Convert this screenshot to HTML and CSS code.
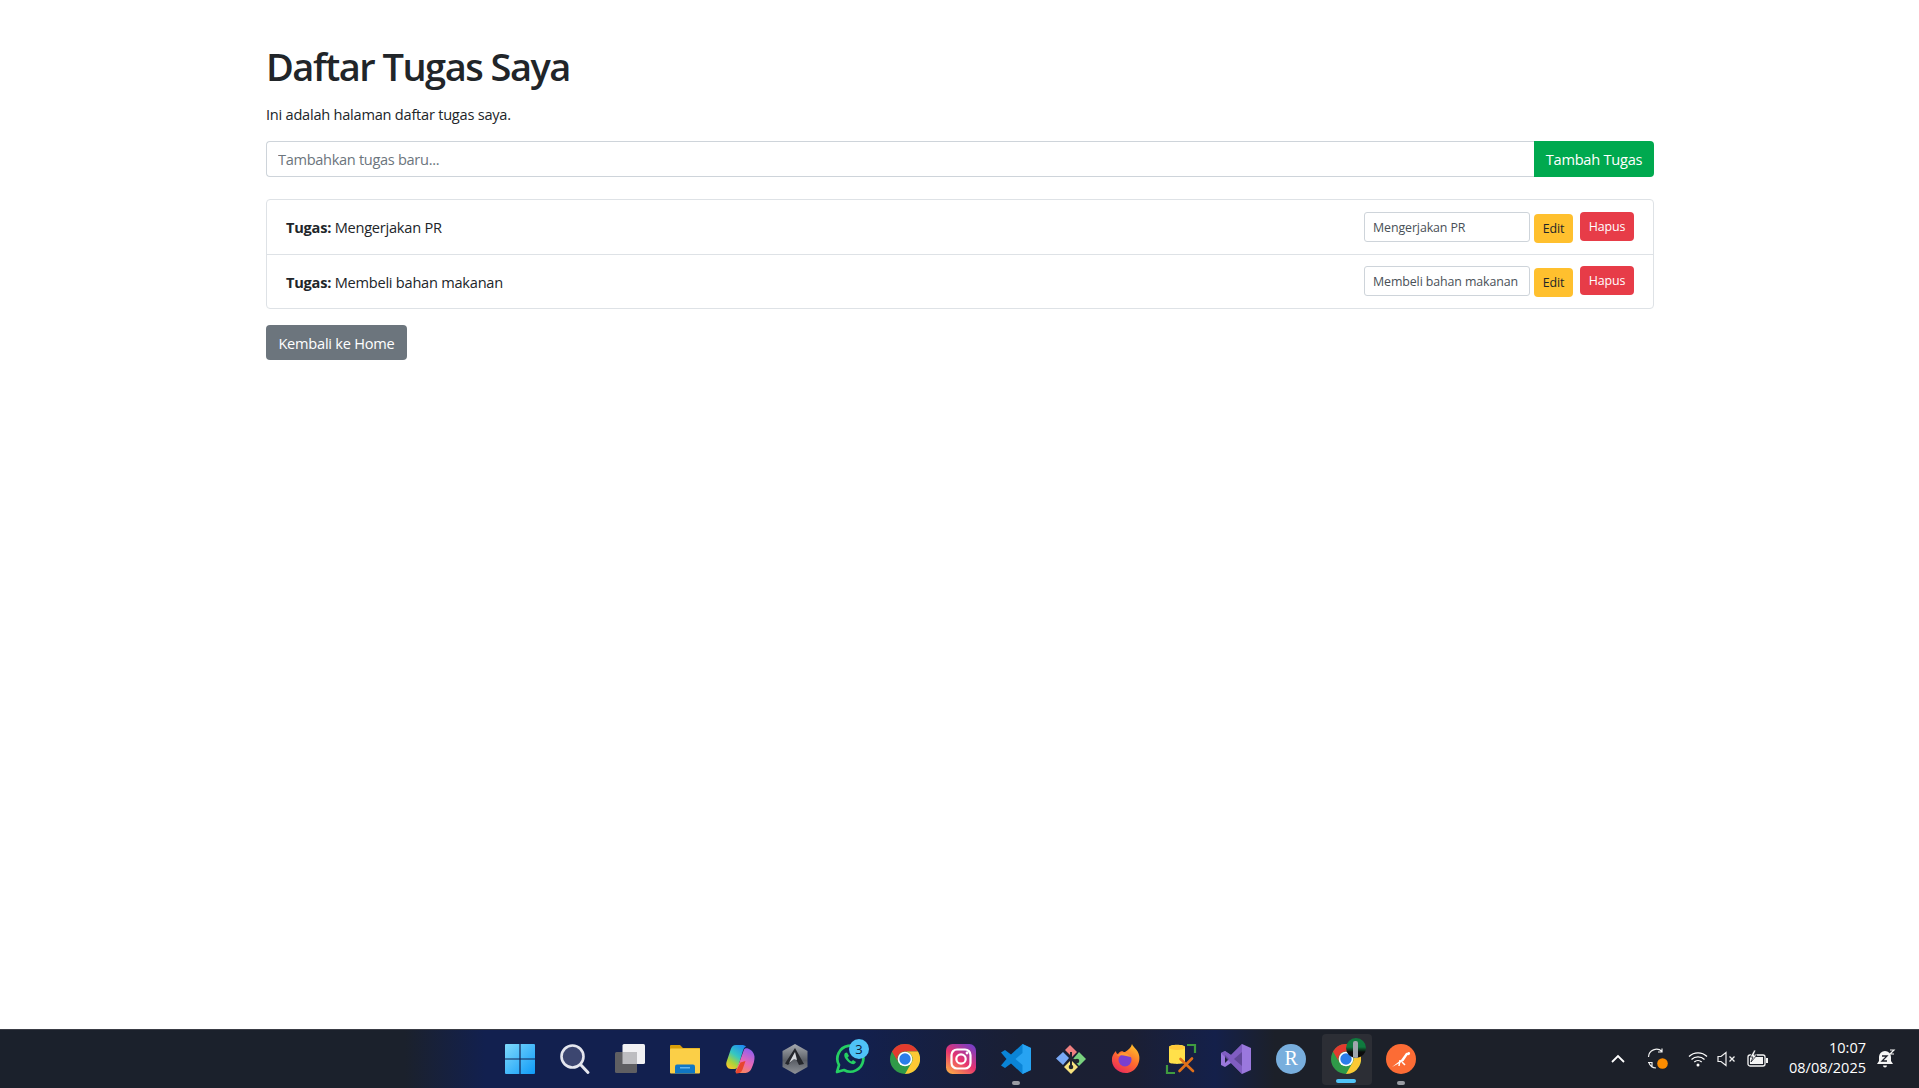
FILE: index.html
```html
<!DOCTYPE html>
<html lang="id">
<head>
<meta charset="utf-8">
<title>Daftar Tugas Saya</title>
<link rel="stylesheet" href="styles.css">
</head>
<body>
<main class="page">
  <h1 class="title">Daftar Tugas Saya</h1>
  <p class="lead">Ini adalah halaman daftar tugas saya.</p>
  <form class="add-group">
    <input class="add-input" type="text" placeholder="Tambahkan tugas baru...">
    <button class="btn btn-add" type="button">Tambah Tugas</button>
  </form>
  <ul class="task-list">
    <li class="task-row">
      <span class="task-text"><strong>Tugas:</strong> Mengerjakan PR</span>
      <div class="task-actions">
        <input class="edit-input" type="text" value="Mengerjakan PR">
        <button class="btn btn-edit" type="button">Edit</button>
        <button class="btn btn-del" type="button">Hapus</button>
      </div>
    </li>
    <li class="task-row">
      <span class="task-text"><strong>Tugas:</strong> Membeli bahan makanan</span>
      <div class="task-actions">
        <input class="edit-input" type="text" value="Membeli bahan makanan">
        <button class="btn btn-edit" type="button">Edit</button>
        <button class="btn btn-del" type="button">Hapus</button>
      </div>
    </li>
  </ul>
  <a class="btn btn-back" href="#">Kembali ke Home</a>
</main>

<footer class="taskbar">
  <div class="dock">
    <div class="slot"><svg class="ico" viewBox="0 0 30 30"><defs><linearGradient id="w" x1="0" y1="0" x2="1" y2="1"><stop offset="0" stop-color="#7fd9fb"/><stop offset="1" stop-color="#0f9bf8"/></linearGradient></defs><path fill="url(#w)" d="M0 1a1 1 0 0 1 1-1h13.400v14.400H0zM15.600 0H29a1 1 0 0 1 1 1v13.400H15.600zM0 15.600h14.400V30H1a1 1 0 0 1-1-1zM15.600 15.600H30V29a1 1 0 0 1-1 1H15.600z"/></svg></div>
    <div class="slot"><svg class="ico" viewBox="0 0 30 30"><circle cx="12.500" cy="12.500" r="11" fill="#3c4670" stroke="#e4e6ee" stroke-width="2.600"/><path d="M20.500 20.500l7.500 8" stroke="#e4e6ee" stroke-width="3" stroke-linecap="round"/></svg></div>
    <div class="slot"><svg class="ico" viewBox="0 0 30 30"><rect x="7.500" y="0" width="22.500" height="20" rx="1.500" fill="#f1f1f3"/><rect x="0" y="8" width="22" height="21" rx="1.500" fill="#5f5f62"/><rect x="7.500" y="8" width="14.500" height="12" fill="#bdbdc0"/></svg></div>
    <div class="slot"><svg class="ico" viewBox="0 0 30 30"><path d="M0 2a1 1 0 0 1 1-1h9l3 3h17v4H0z" fill="#d99e09"/><rect x="0" y="4.500" width="30" height="25" rx="1" fill="#fbcf47"/><path d="M5 29.500v-7a2 2 0 0 1 2-2h16a2 2 0 0 1 2 2v7z" fill="#1077c4"/><rect x="10" y="23" width="10" height="1.500" fill="#63b6ef"/></svg></div>
    <div class="slot"><svg class="ico" viewBox="0 0 30 30"><defs><linearGradient id="c1" x1="0.800" y1="0" x2="0.200" y2="1"><stop offset="0" stop-color="#1f8cf0"/><stop offset="0.450" stop-color="#35c7c2"/><stop offset="0.750" stop-color="#a9d43b"/><stop offset="1" stop-color="#f7c62c"/></linearGradient><linearGradient id="c2" x1="0.700" y1="0" x2="0.300" y2="1"><stop offset="0" stop-color="#8d5ff0"/><stop offset="0.550" stop-color="#e868b8"/><stop offset="1" stop-color="#f8875a"/></linearGradient></defs><path d="M17 1h-6c-3 0-4.500 2-5.300 4.500L1.500 18c-1 3.500 1 7 4.500 7h3.500c2 0 3.500-1.500 4-3.500L18 6.500c.6-2.200 2-3.500 3-4C20 1.500 18.500 1 17 1z" fill="url(#c1)"/><path d="M19 5.500c1-1.500 2.500-1.500 4-1 2.500.8 6 3.500 6.500 8 .3 3-1 8-3 12-1 2.300-3 4.500-6 4.500h-8c-2 0-2.500-1.200-1.500-3l3.500-8z" fill="url(#c2)"/><path d="M11.500 29.500c2.500 0 5-1 6-4l3-8.500-5 1.500-4 8c-.8 1.500-.8 3 0 3z" fill="#e8452f"/></svg></div>
    <div class="slot"><svg class="ico hex" viewBox="0 0 30 30"><defs><linearGradient id="h" x1="0" y1="0" x2="0" y2="1"><stop offset="0" stop-color="#a6aab0"/><stop offset="0.550" stop-color="#5b5f66"/><stop offset="1" stop-color="#8e9298"/></linearGradient></defs><path d="M15 0l12.500 7v16L15 30 2.500 23V7z" fill="url(#h)"/><path d="M15 4l9 16-5 1-4-8-7 8-3-1.500z" fill="#25272c"/><path d="M15 8l2 8-3-1-5 4z" fill="#d6d8dc"/></svg></div>
    <div class="slot badge-host"><svg class="ico" viewBox="0 0 30 30"><path d="M2 28l2-7A13 13 0 1 1 9 26z" fill="none" stroke="#25cf63" stroke-width="2.700" stroke-linejoin="round"/><path d="M10 9c-1 1-1 3 0 5 2 3 4 5 7 6 2 .5 3.500-.5 4-2l-3-2-1.500 1.500c-2-1-3-2.500-4-4L14 12l-2-3.500z" fill="#25cf63"/></svg><span class="badge">3</span></div>
    <div class="slot"><svg class="ico" viewBox="0 0 30 30"><use href="#chrome"/></svg></div>
    <div class="slot"><svg class="ico" viewBox="0 0 30 30"><defs><linearGradient id="ig" x1="0.100" y1="1" x2="0.800" y2="0"><stop offset="0" stop-color="#fcb045"/><stop offset="0.500" stop-color="#e7336f"/><stop offset="1" stop-color="#7a3fc4"/></linearGradient></defs><rect width="30" height="30" rx="6.500" fill="url(#ig)"/><rect x="5.500" y="5.500" width="19" height="19" rx="5.500" fill="none" stroke="#fff" stroke-width="2.200"/><circle cx="15" cy="15" r="4.700" fill="none" stroke="#fff" stroke-width="2.200"/><circle cx="21" cy="9" r="1.400" fill="#fff"/></svg></div>
    <div class="slot running"><svg class="ico" viewBox="0 0 30 30"><path d="M21.500 0L30 4v22l-8.500 4L10 19.500 4 24l-4-2.500L5.500 15 0 8.500 4 6l6 4.500z" fill="#0a84d6"/><path d="M21.500 0L30 4v22l-8.500 4V21l-7-6 7-6z" fill="#27a3f2"/></svg></div>
    <div class="slot"><svg class="ico" viewBox="0 0 30 30"><path d="M14 1l7 7-5 5-7-7z" fill="#f08080"/><path d="M7 8l6 6-6 7-7-6.500z" fill="#79a8f5"/><path d="M23 8l7 7-7 7-6-7z" fill="#79d17f"/><path d="M15 16l7 7-7 7-7-7z" fill="#f7e27e"/><path d="M15 8v15M15 15l6 2" stroke="#23262e" stroke-width="2" fill="none"/><circle cx="15" cy="23" r="2.300" fill="#23262e"/><circle cx="21" cy="17" r="2.300" fill="#23262e"/></svg></div>
    <div class="slot"><svg class="ico" viewBox="0 0 30 30"><defs><linearGradient id="ff" x1="0.800" y1="0" x2="0.200" y2="1"><stop offset="0" stop-color="#ffc42b"/><stop offset="0.500" stop-color="#ff6a2e"/><stop offset="1" stop-color="#e8265e"/></linearGradient></defs><path d="M21 0c1 3 6 6 7 11 2 8-4 18-13 18C6 29 0 22 1 14c.5-3 2-5 4-7 0 2 1 3 2 3 1-2 3-3 5-3 0 0-1 1 2 1 3-2 6-4 7-8z" fill="url(#ff)"/><circle cx="14" cy="16" r="6.500" fill="#7a3fd0"/><path d="M6 12c5-2 9 0 14 1-2-3-5-5-9-4-2 .5-4 1.500-5 3z" fill="#ff9833"/></svg></div>
    <div class="slot"><svg class="ico" viewBox="0 0 30 30"><path d="M21 1h8v8M1 21v8h8" fill="none" stroke="#3f9b3f" stroke-width="2.200"/><path d="M3 3c0-3 16-3 16 0v15c0 2.500-16 2.500-16 0z" fill="#ffe04a"/><ellipse cx="11" cy="3.500" rx="8" ry="2.500" fill="#ffc83a"/><path d="M13.500 27L26 14.500M14.500 15L27 27" stroke="#e0701a" stroke-width="2.600" stroke-linecap="round"/></svg></div>
    <div class="slot"><svg class="ico" viewBox="0 0 30 30"><path d="M21 0l9 4v22l-9 4-11-11-6 4-4-2V9l4-2 6 4z" fill="#9a78dd"/><path d="M21 8v14l-8-7z" fill="#20243c"/><path d="M4 11v8l4-4z" fill="#20243c"/><path d="M21 0L10 11 4 7 0 9l10 10 11 11z" fill="#7754b8" opacity=".75"/></svg></div>
    <div class="slot"><svg class="ico" viewBox="0 0 30 30"><circle cx="15" cy="15" r="15" fill="#78aedd"/><text class="r-letter" x="15" y="21" text-anchor="middle">R</text></svg></div>
    <div class="slot active running-blue"><svg class="ico" viewBox="0 0 30 30"><use href="#chrome"/></svg><span class="avatar"><span class="avatar-man"></span></span></div>
    <div class="slot running"><svg class="ico" viewBox="0 0 30 30"><circle cx="15" cy="15" r="15" fill="#fc6c35"/><path d="M6 23l9-7 5-7 2-.5c1-1 2.500 0 2 1.500-.5 1-1.500 1.500-2.500 1l-4 6z" fill="#fff"/><path d="M14 16l-1 6M16 18l3 3" stroke="#fff" stroke-width="1.500"/></svg></div>
  </div>
  <div class="tray">
    <svg class="tray-ico chev" viewBox="0 0 16 10"><path d="M2 8l6-6 6 6" fill="none" stroke="#fff" stroke-width="1.800"/></svg>
    <svg class="tray-ico sync" viewBox="0 0 22 22"><path d="M1.500 9A8 8 0 0 1 15 3.500M15 .5v3.500h-4M1 14.500h4v3.500M2 15a8 8 0 0 0 7 5" fill="none" stroke="#f1f1f1" stroke-width="1.200"/><circle cx="15.500" cy="15.500" r="5.300" fill="#fb8c00"/></svg>
    <svg class="tray-ico wifi" viewBox="0 0 20 16"><path d="M1 5.500a13 13 0 0 1 18 0M3.500 8.500a9.500 9.500 0 0 1 13 0M6.300 11a5.500 5.500 0 0 1 7.400 0" fill="none" stroke="#fff" stroke-width="1.300"/><circle cx="10" cy="14" r="1.500" fill="#fff"/></svg>
    <svg class="tray-ico mute" viewBox="0 0 20 16"><path d="M1 5.500h3L9 1.500v13l-5-4H1z" fill="none" stroke="#f0f0f0" stroke-width="1.200"/><path d="M12.500 5.500l5 5M17.500 5.500l-5 5" stroke="#f0f0f0" stroke-width="1.300"/></svg>
    <svg class="tray-ico batt" viewBox="0 0 22 18"><rect x="1" y="5" width="17" height="11" rx="2" fill="none" stroke="#f5f5f5" stroke-width="1.300"/><rect x="3" y="7" width="13" height="7" fill="#f5f5f5"/><rect x="19" y="8" width="2" height="5" fill="#f5f5f5"/><path d="M7 0L3 7h3l-2 5 6-7H7l2-5z" fill="#f5f5f5" stroke="#1c1f29" stroke-width=".8"/></svg>
    <div class="clock"><span>10:07</span><span>08/08/2025</span></div>
    <svg class="tray-ico bell" viewBox="0 0 20 20"><path d="M9 2a6 6 0 0 1 6 6v4l2 3H1l2-3V8a6 6 0 0 1 6-6z" fill="#f5f5f5"/><path d="M7 16.500h4a2 2 0 0 1-4 0z" fill="#f5f5f5"/><path d="M6 7h5l-5 5h5" fill="none" stroke="#1c1f29" stroke-width="1.300"/><path d="M14 1h4l-4 4h4" fill="none" stroke="#f5f5f5" stroke-width="1.200"/></svg>
  </div>
</footer>

<svg class="defs" width="0" height="0">
  <symbol id="chrome" viewBox="0 0 30 30">
    <circle cx="15" cy="15" r="15" fill="#2f9a48"/>
    <path d="M2 7.500A15 15 0 0 1 28 7.500H15A7.500 7.500 0 0 0 8.500 18.800z" fill="#e33b2e"/>
    <path d="M28 7.500A15 15 0 0 1 15 30l6.500-11.200A7.500 7.500 0 0 0 15 7.500z" fill="#fcc934"/>
    <circle cx="15" cy="15" r="7.300" fill="#fff"/>
    <circle cx="15" cy="15" r="5.700" fill="#2a7de9"/>
  </symbol>
</svg>
</body>
</html>
```
FILE: styles.css
```css
* { box-sizing: border-box; }
html, body { height: 100%; }
body {
  margin: 0;
  display: flex;
  flex-direction: column;
  height: 1088px;
  overflow: hidden;
  background: #fff;
  color: #212529;
  font-family: "Open Sans", "Noto Sans", sans-serif;
  font-size: 14.6px;
  letter-spacing: -0.24px;
}
.page {
  flex: 1;
  width: 1388px;
  margin-left: 266px;
  padding-top: 42px;
}
.title {
  margin: 0 0 12px;
  font-size: 38px;
  line-height: 48px;
  font-weight: 600;
  letter-spacing: -1.5px;
}
.lead {
  margin: 0 0 15px;
  line-height: 24px;
}
.add-group { display: flex; margin-bottom: 22px; }
.add-input {
  flex: 1;
  height: 36px;
  padding: 0 11px;
  font: inherit;
  letter-spacing: -0.32px;
  color: #212529;
  border: 1px solid #ced4da;
  border-right: 0;
  border-radius: 4px 0 0 4px;
  outline: none;
}
.add-input::placeholder { color: #6c757d; }
.btn {
  display: inline-flex;
  align-items: center;
  justify-content: center;
  border: 0;
  border-radius: 4px;
  color: #fff;
  font: inherit;
  letter-spacing: inherit;
  text-decoration: none;
}
.btn-add {
  width: 120px;
  height: 36px;
  background: #00a94f;
  border-radius: 0 4px 4px 0;
}
.task-list {
  list-style: none;
  margin: 0 0 16px;
  padding: 0;
  border: 1px solid #dee2e6;
  border-radius: 4px;
}
.task-row {
  display: flex;
  justify-content: space-between;
  align-items: center;
  height: 54px;
  padding: 0 19px;
}
.task-row + .task-row { border-top: 1px solid #dee2e6; }
.task-text strong { font-weight: 700; }
.task-actions { display: flex; align-items: flex-start; }
.edit-input {
  width: 166px;
  height: 30px;
  padding: 1px 8px 0;
  font: inherit;
  font-size: 12.4px;
  letter-spacing: -0.1px;
  color: #495057;
  border: 1px solid #ced4da;
  border-radius: 3px;
  outline: none;
}
.btn-edit {
  width: 39px;
  height: 29px;
  margin: 2px 7px 0 4px;
  background: #ffc02e;
  color: #212529;
  font-size: 12.4px;
  letter-spacing: -0.1px;
}
.btn-del {
  width: 54px;
  height: 29px;
  background: #e73c48;
  font-size: 12.4px;
  letter-spacing: -0.1px;
}
.btn-back {
  width: 141px;
  height: 35px;
  background: #6c757d;
}
.taskbar {
  flex: none;
  height: 59px;
  display: grid;
  grid-template-columns: 1fr auto 1fr;
  border-top: 1px solid #3a3d45;
  background: linear-gradient(90deg, #1b212c 0, #1b212c 405px, #12204f 485px, #12204f 850px, #1a1f33 1020px, #1b1f33 1130px, #14204a 1215px, #1c2029 1275px, #1c2029 100%);
}
.dock { grid-column: 2; display: flex; align-items: center; padding-left: 2px; }
.slot {
  position: relative;
  width: 55.1px;
  height: 100%;
  display: flex;
  align-items: center;
  justify-content: center;
}
.ico { width: 30px; height: 30px; display: block; overflow: visible; }
.r-letter { font-family: "Liberation Serif", serif; font-size: 20px; fill: #fff; }
.badge {
  position: absolute;
  top: 9px;
  right: 9px;
  width: 20px;
  height: 20px;
  border-radius: 50%;
  background: #4fc3f7;
  color: #10203a;
  font-size: 13px;
  line-height: 20px;
  text-align: center;
}
.running::after, .running-blue::after {
  content: "";
  position: absolute;
  bottom: 3px;
  left: 50%;
  width: 8px;
  height: 4px;
  margin-left: -4px;
  border-radius: 2px;
  background: #9a9ca3;
}
.active::before {
  content: "";
  position: absolute;
  left: 3px;
  right: 2px;
  top: 4px;
  bottom: 3px;
  background: #2c2e35;
  border-radius: 4px;
}
.active .ico { position: relative; }
.running-blue::after {
  width: 20px;
  margin-left: -10px;
  bottom: 5px;
  background: #4fc3f7;
}
.avatar {
  position: absolute;
  top: 8px;
  left: 27px;
  width: 20px;
  height: 20px;
  border-radius: 50%;
  background: linear-gradient(180deg, #0f7a3e 0, #0f7a3e 45%, #0c0c0c 70%);
  display: flex;
  justify-content: center;
  overflow: hidden;
}
.avatar-man { width: 5px; height: 20px; margin-top: 3px; background: #9fa6ad; border-radius: 2px; }
.tray {
  grid-column: 3;
  display: flex;
  align-items: center;
  justify-content: flex-end;
  padding-right: 23px;
}
.tray-ico { display: block; flex: none; }
.chev { width: 16px; height: 10px; margin-right: 21px; }
.sync { width: 22px; height: 22px; margin-right: 19px; }
.wifi { width: 20px; height: 16px; margin-right: 9px; }
.mute { width: 20px; height: 16px; margin-right: 10px; }
.batt { width: 22px; height: 18px; margin-right: 20px; }
.clock {
  display: flex;
  flex-direction: column;
  align-items: flex-end;
  margin-right: 10px;
  padding-bottom: 2px;
  color: #fff;
  font-size: 14.5px;
  letter-spacing: 0;
  line-height: 20px;
}
.bell { width: 20px; height: 20px; }
.defs { position: absolute; }
```
